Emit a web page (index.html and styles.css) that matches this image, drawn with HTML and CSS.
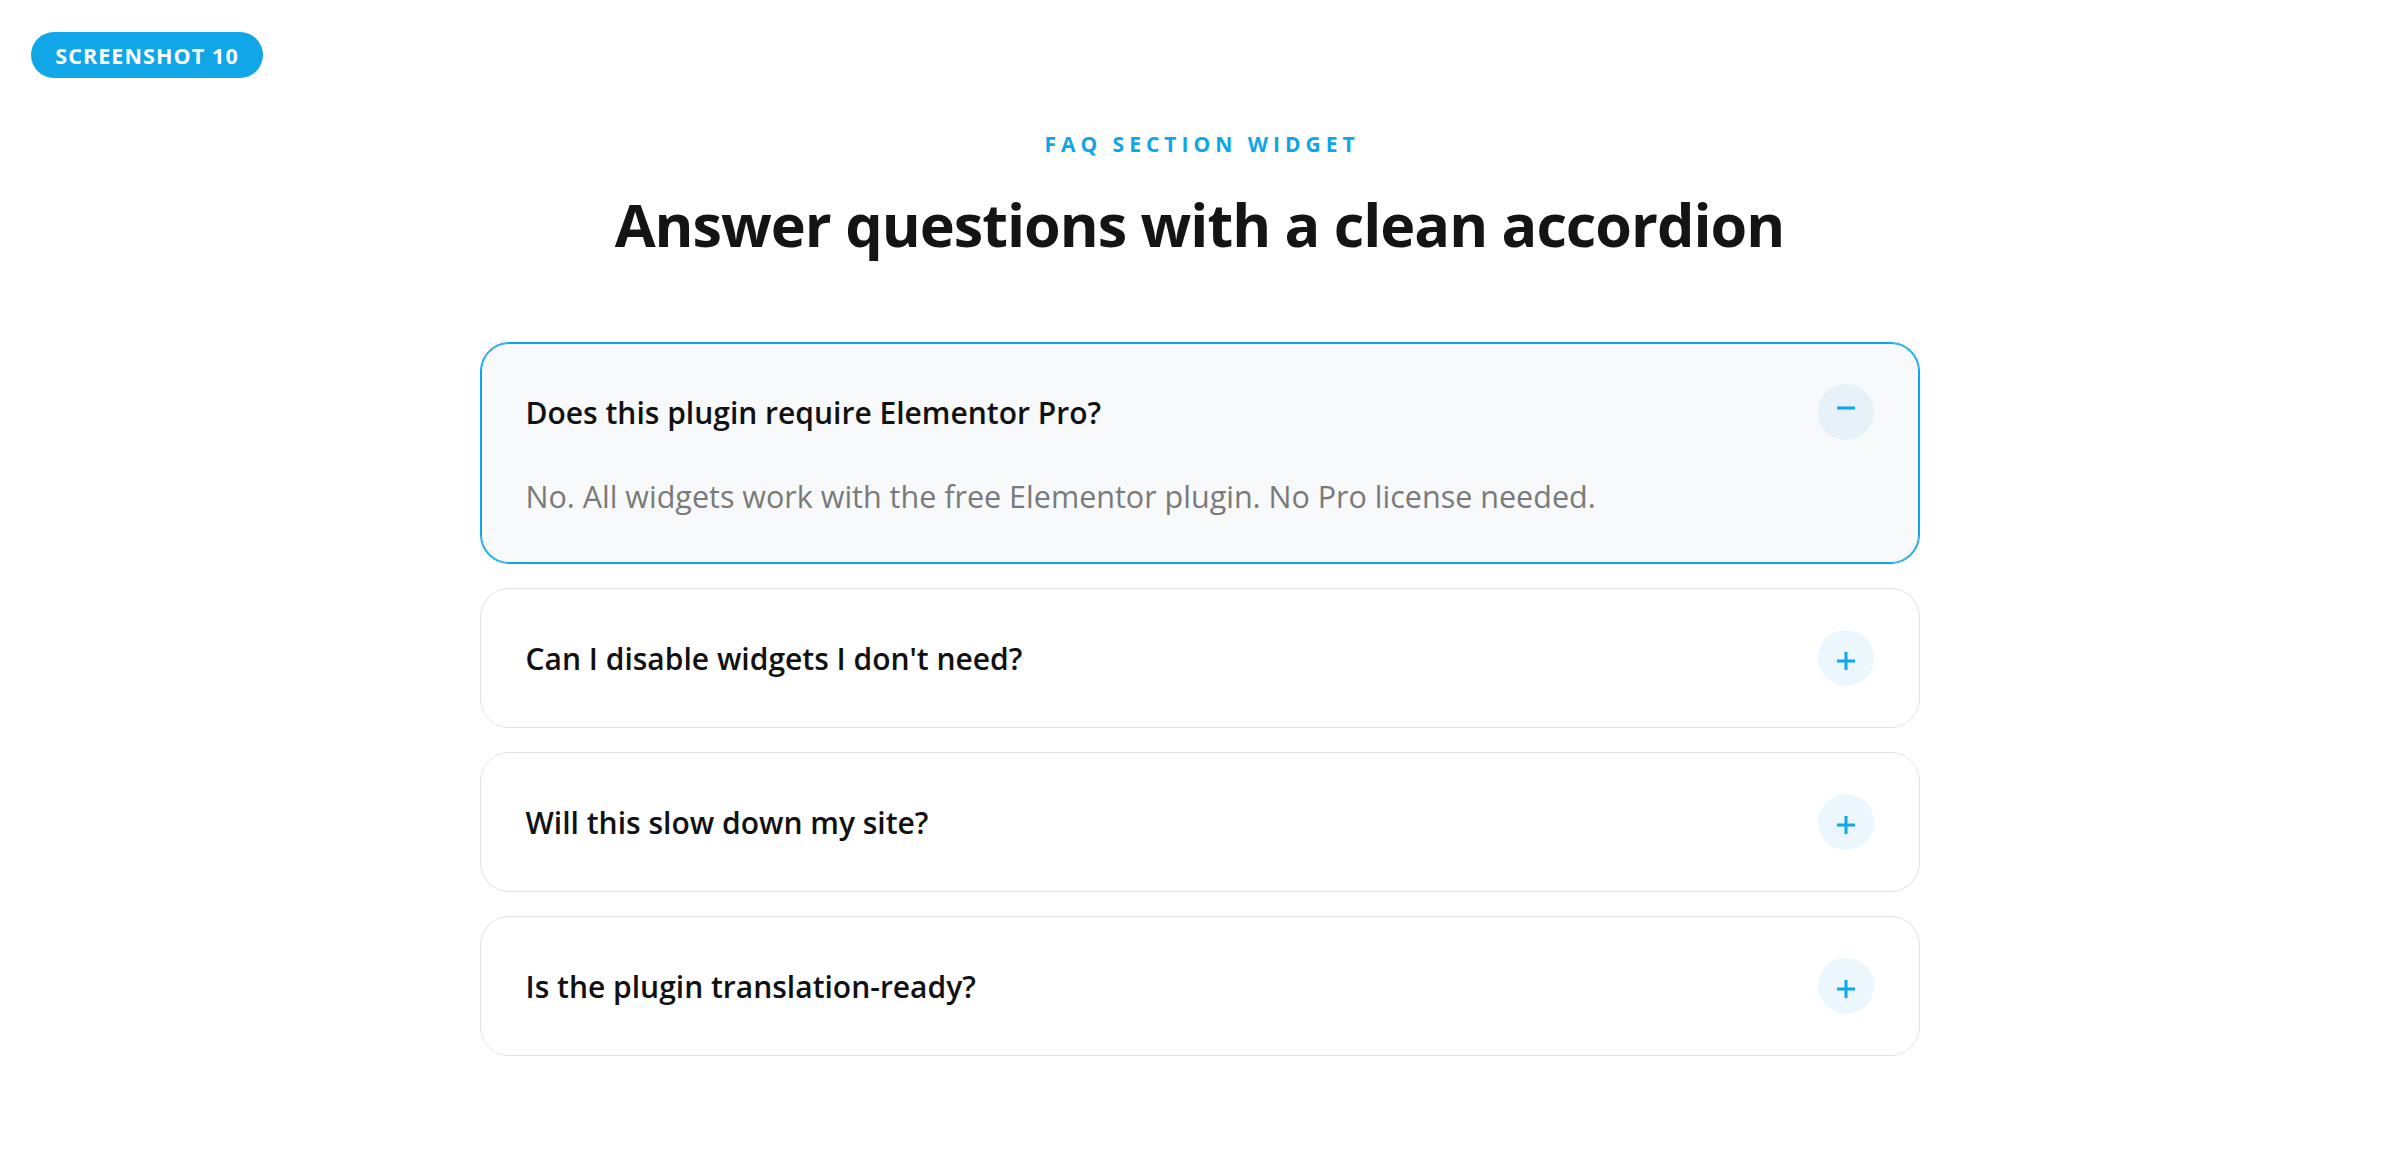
FILE: index.html
```html
<!DOCTYPE html>
<html lang="en">
<head>
<meta charset="utf-8">
<title>FAQ Section Widget</title>
<link rel="stylesheet" href="styles.css">
</head>
<body>
<div class="page">
  <div class="badge-row"><span class="badge">SCREENSHOT 10</span></div>
  <section class="faq">
    <p class="eyebrow">FAQ SECTION WIDGET</p>
    <h1 class="title">Answer questions with a clean accordion</h1>
    <div class="list">
      <div class="item open">
        <div class="head">
          <span class="q">Does this plugin require Elementor Pro?</span>
          <span class="toggle"><svg width="18" height="18" viewBox="0 0 18 18" class="ico minus"><rect x="0" y="7.5" width="18" height="3" fill="#0ea5e9"/></svg></span>
        </div>
        <p class="a">No. All widgets work with the free Elementor plugin. No Pro license needed.</p>
      </div>
      <div class="item">
        <div class="head">
          <span class="q">Can I disable widgets I don't need?</span>
          <span class="toggle"><svg width="18" height="18" viewBox="0 0 18 18" class="ico plus"><rect x="0" y="7.5" width="18" height="3" fill="#0ea5e9"/><rect x="7.5" y="0" width="3" height="18" fill="#0ea5e9"/></svg></span>
        </div>
      </div>
      <div class="item">
        <div class="head">
          <span class="q">Will this slow down my site?</span>
          <span class="toggle"><svg width="18" height="18" viewBox="0 0 18 18" class="ico plus"><rect x="0" y="7.5" width="18" height="3" fill="#0ea5e9"/><rect x="7.5" y="0" width="3" height="18" fill="#0ea5e9"/></svg></span>
        </div>
      </div>
      <div class="item">
        <div class="head">
          <span class="q">Is the plugin translation-ready?</span>
          <span class="toggle"><svg width="18" height="18" viewBox="0 0 18 18" class="ico plus"><rect x="0" y="7.5" width="18" height="3" fill="#0ea5e9"/><rect x="7.5" y="0" width="3" height="18" fill="#0ea5e9"/></svg></span>
        </div>
      </div>
    </div>
  </section>
</div>
</body>
</html>
```

FILE: styles.css
```css
* { box-sizing: border-box; }
html, body { margin: 0; padding: 0; background: #ffffff; }
body {
  font-family: "Open Sans", "Noto Sans", "Liberation Sans", sans-serif;
  color: #141414;
}
.page {
  padding: 32px 31px 0;
}
.badge-row { display: flex; }
.badge {
  display: inline-flex;
  align-items: center;
  justify-content: center;
  height: 46px;
  width: 232px;
  border-radius: 23px;
  background: #10a6e8;
  color: #ffffff;
  font-weight: 700;
  font-size: 21.5px;
  letter-spacing: 1.1px;
}
.faq {
  width: 1440px;
  margin: 0 auto;
  display: flex;
  flex-direction: column;
  align-items: center;
  position: relative;
  left: -0.5px;
}
.eyebrow {
  margin: 54px 0 0;
  font-size: 21px;
  line-height: 24px;
  font-weight: 700;
  letter-spacing: 5px;
  text-indent: 5px;
  color: #0ea5e9;
}
.title {
  margin: 32px 0 0;
  font-size: 59.3px;
  line-height: 72px;
  font-weight: 700;
  letter-spacing: -1px;
  color: #141414;
}
.list {
  width: 1440px;
  margin-top: 82px;
  display: flex;
  flex-direction: column;
  gap: 24px;
}
.item {
  border: 1px solid #e2e2e2;
  border-radius: 29px;
  padding: 41px 45px;
  background: #ffffff;
}
.item.open {
  border-color: #0ea5e9;
  box-shadow: inset 0 0 0 1px #0ea5e9;
  background: #f7f9fb;
}
.head {
  display: flex;
  align-items: center;
  justify-content: space-between;
  height: 56px;
}
.q {
  font-size: 30px;
  font-weight: 600;
  color: #111111;
}
.toggle {
  width: 56px;
  height: 56px;
  border-radius: 50%;
  background: #ebf6fd;
  display: flex;
  align-items: center;
  justify-content: center;
}
.item.open .toggle { background: #e6f1f8; }
.ico.plus { margin-top: 6px; }
.ico.minus { margin-top: -9px; }
.a {
  margin: 34px 0 0;
  padding-bottom: 4px;
  font-size: 30.5px;
  line-height: 44px;
  color: #7a7a7a;
}
```
